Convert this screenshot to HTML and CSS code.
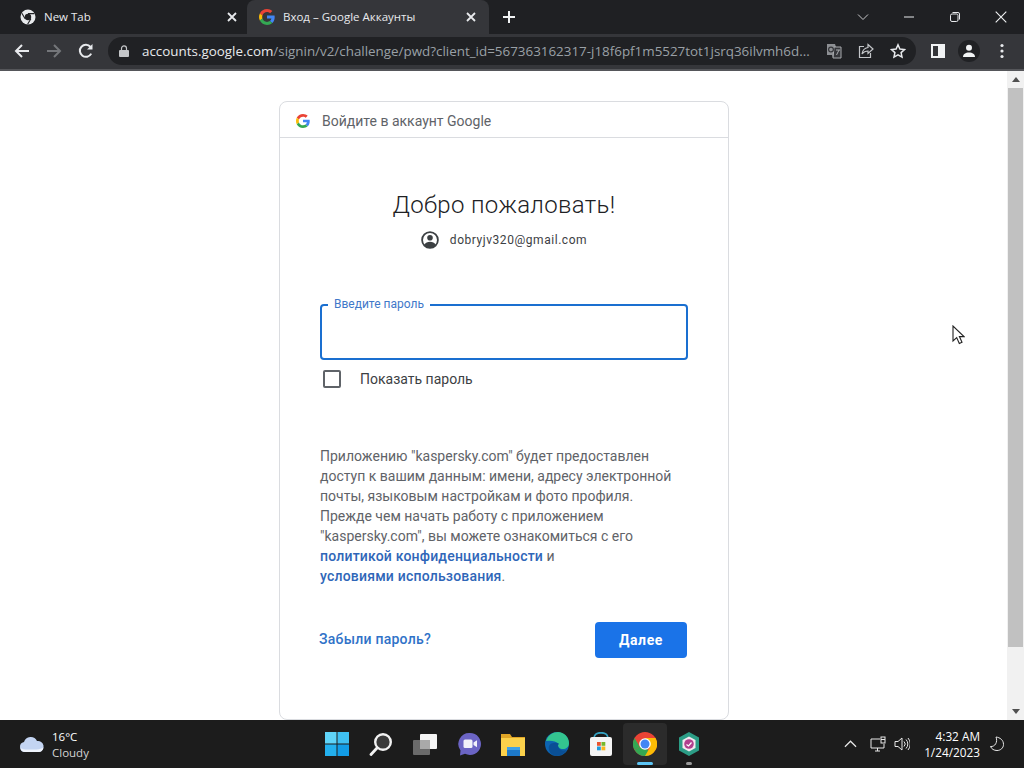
FILE: index.html
```html
<!DOCTYPE html>
<html lang="en">
<head>
    <meta charset="UTF-8">
    <meta name="viewport" content="width=device-width, initial-scale=1.0">
    <title>Вход – Google Аккаунты</title>
    <link rel="stylesheet" href="styles.css">
</head>
<body>
    <svg class="defs" width="0" height="0">
        <symbol id="google-g" viewBox="0 0 18 18">
            <path fill="#EA4335" d="M9 3.48c1.69 0 2.83.73 3.48 1.34l2.54-2.48C13.46.89 11.43 0 9 0 5.48 0 2.44 2.02.96 4.96l2.91 2.26C4.6 5.05 6.62 3.48 9 3.48z"/>
            <path fill="#4285F4" d="M17.64 9.2c0-.74-.06-1.28-.19-1.84H9v3.34h4.96c-.1.83-.64 2.08-1.84 2.92l2.84 2.2c1.7-1.57 2.68-3.88 2.68-6.62z"/>
            <path fill="#FBBC05" d="M3.88 10.78A5.54 5.54 0 0 1 3.58 9c0-.62.11-1.22.29-1.78L.96 4.96A9 9 0 0 0 0 9c0 1.45.35 2.82.96 4.04l2.92-2.26z"/>
            <path fill="#34A853" d="M9 18c2.43 0 4.47-.8 5.96-2.18l-2.84-2.2c-.76.53-1.78.9-3.12.9-2.38 0-4.4-1.57-5.12-3.74L.97 13.04C2.45 15.98 5.48 18 9 18z"/>
        </symbol>
    </svg>

    <div class="tabstrip">
        <div class="tab">
            <svg class="favicon" viewBox="0 0 16 16"><circle cx="8" cy="8" r="7.5" fill="#e8eaed"/><circle cx="8" cy="8" r="3.2" fill="#202124"/><path d="M8 4.6h6.4M5.1 9.7 1.9 4.2M10.9 9.7 7.6 15.3" stroke="#202124" stroke-width="1.1" fill="none"/></svg>
            <span class="tab-title">New Tab</span>
            <svg class="tab-close" viewBox="0 0 10 10"><path d="M1 1l8 8M9 1l-8 8" stroke="#e8eaed" stroke-width="1.8"/></svg>
        </div>
        <div class="tab tab-active">
            <svg class="favicon" viewBox="0 0 18 18"><use href="#google-g"/></svg>
            <span class="tab-title">Вход – Google Аккаунты</span>
            <svg class="tab-close" viewBox="0 0 10 10"><path d="M1 1l8 8M9 1l-8 8" stroke="#e8eaed" stroke-width="1.8"/></svg>
        </div>
        <svg class="new-tab" viewBox="0 0 12 12"><path d="M6 0v12M0 6h12" stroke="#f1f3f4" stroke-width="2"/></svg>
        <div class="window-controls">
            <svg class="win-btn" viewBox="0 0 12 12"><path d="M1 3.5l5 5 5-5" stroke="#c8c9cb" fill="none" stroke-width="1"/></svg>
            <svg class="win-btn" viewBox="0 0 12 12"><path d="M1 6h10" stroke="#e8eaed" fill="none" stroke-width="1"/></svg>
            <svg class="win-btn" viewBox="0 0 12 12"><rect x="1.5" y="3" width="7.5" height="7.5" rx="1.5" stroke="#e8eaed" fill="none"/><path d="M3.5 1.5h5.5a1.5 1.5 0 0 1 1.5 1.5v5.5" stroke="#e8eaed" fill="none"/></svg>
            <svg class="win-btn" viewBox="0 0 12 12"><path d="M.7.7l10.6 10.6M11.3.7.7 11.3" stroke="#f1f3f4" fill="none" stroke-width="1.1"/></svg>
        </div>
    </div>

    <div class="toolbar">
        <svg class="nav-icon" viewBox="0 0 16 16"><path d="M15 8H2M8 2 2 8l6 6" stroke="#e8eaed" stroke-width="2" fill="none"/></svg>
        <svg class="nav-icon" viewBox="0 0 16 16"><path d="M1 8h13M8 2l6 6-6 6" stroke="#74767a" stroke-width="2" fill="none"/></svg>
        <svg class="nav-icon" viewBox="0 0 16 16"><path d="M13.2 10.6A6 6 0 1 1 12.5 4" stroke="#e8eaed" stroke-width="2" fill="none"/><path d="M14.5 1v5.5H9z" fill="#e8eaed"/></svg>
        <div class="omnibox">
            <svg class="lock" viewBox="0 0 10 12"><path d="M2.5 5V3.4a2.5 2.5 0 0 1 5 0V5" stroke="#c4c6c9" stroke-width="1.2" fill="none"/><rect y="5" width="10" height="7" rx="1" fill="#c4c6c9"/></svg>
            <span class="url"><span class="url-host">accounts.google.com</span>/signin/v2/challenge/pwd?client_id=567363162317-j18f6pf1m5527tot1jsrq36ilvmh6d...</span>
            <svg class="omni-icon" viewBox="0 0 16 16"><path d="M1 1h8l1 3h5v11H7l-1-3H1z" fill="#8d8f93"/><path d="M8 4h7v11H7z" fill="#35363a" stroke="#a9abae"/><circle cx="5" cy="6.5" r="2.4" stroke="#35363a" fill="none" stroke-width="1.2"/><path d="M10 7h4M13 7l-2.5 5" stroke="#a9abae" fill="none"/></svg>
            <svg class="omni-icon" viewBox="0 0 16 16"><path d="M6 3.5H1.5v11h11V10" stroke="#c4c6c9" stroke-width="1.2" fill="none"/><path d="M10 1.5 15 6l-5 4.5V8C7.500 8 5.500 9 4 11c.5-3.500 2.500-6 6-6.500z" stroke="#c4c6c9" stroke-width="1.2" fill="none"/></svg>
            <svg class="omni-icon" viewBox="0 0 16 16"><path d="m8 1.800 1.900 4.200 4.600.5-3.400 3.100.9 4.500L8 11.800l-4 2.300.9-4.500L1.500 6.500 6.100 6z" stroke="#e8eaed" stroke-width="1.500" fill="none"/></svg>
        </div>
        <div class="toolbar-right">
            <svg class="side-icon" viewBox="0 0 14 14"><path fill-rule="evenodd" d="M0 0h14v14H0zM2 2v10h5V2z" fill="#f1f3f4"/></svg>
            <div class="avatar">
                <svg viewBox="0 0 14 14"><circle cx="7" cy="3.800" r="3" fill="#f1f3f4"/><path d="M1 13c0-3 2.500-4.500 6-4.500s6 1.500 6 4.500z" fill="#f1f3f4"/></svg>
            </div>
            <svg class="menu-icon" viewBox="0 0 4 16"><circle cx="2" cy="2.500" r="1.600" fill="#e8eaed"/><circle cx="2" cy="8" r="1.600" fill="#e8eaed"/><circle cx="2" cy="13.500" r="1.600" fill="#e8eaed"/></svg>
        </div>
    </div>

    <div class="viewport">
        <div class="page">
            <div class="card">
                <div class="card-header">
                    <svg class="header-g" viewBox="0 0 18 18"><use href="#google-g"/></svg>
                    <span>Войдите в аккаунт Google</span>
                </div>
                <div class="card-body">
                    <h1>Добро пожаловать!</h1>
                    <div class="account">
                        <svg class="account-icon" viewBox="0 0 18 18"><circle cx="9" cy="9" r="7.900" fill="#fff" stroke="#3c4043" stroke-width="1.800"/><circle cx="9" cy="6.800" r="2.800" fill="#3c4043"/><path d="M3 14c1.500-2.400 3.500-3.200 6-3.200s4.500.8 6 3.200c-1.500 1.800-3.500 3-6 3s-4.500-1.200-6-3z" fill="#3c4043"/></svg>
                        <span>dobryjv320@gmail.com</span>
                    </div>
                    <div class="password-field">
                        <span class="field-label">Введите пароль</span>
                    </div>
                    <label class="show-password">
                        <span class="checkbox"></span>
                        <span>Показать пароль</span>
                    </label>
                    <p class="consent">Приложению "kaspersky.com" будет предоставлен доступ к вашим данным: имени, адресу электронной почты, языковым настройкам и фото профиля. Прежде чем начать работу с приложением "kaspersky.com", вы можете ознакомиться с его<br><a href="#">политикой конфиденциальности</a> и<br><a href="#">условиями использования</a>.</p>
                    <div class="actions">
                        <a class="forgot" href="#">Забыли пароль?</a>
                        <button class="next">Далее</button>
                    </div>
                </div>
            </div>
            <svg class="cursor" viewBox="0 0 13 20"><path d="M1 1v15l3.700-3.400 2.600 5.900 2.700-1.200-2.600-5.700H12z" fill="#fff" stroke="#222" stroke-width="1.100"/></svg>
        </div>
        <div class="scrollbar">
            <div class="scroll-arrow"><svg viewBox="0 0 8 5"><path d="M4 0l4 5H0z" fill="#505050"/></svg></div>
            <div class="scroll-track"><div class="scroll-thumb"></div></div>
            <div class="scroll-arrow"><svg viewBox="0 0 8 5"><path d="M0 0h8L4 5z" fill="#505050"/></svg></div>
        </div>
    </div>

    <div class="taskbar">
        <div class="weather">
            <svg class="weather-icon" viewBox="0 0 26 18"><path d="M6 17a5 5 0 0 1-1-9.900A7 7 0 0 1 18 6a5.500 5.500 0 0 1 2 11z" fill="#c3d4f2"/><path d="M1.500 13c3 2 7 1.500 10 1.500s9 .5 13-2c-.5 3-2.500 4.500-4.500 4.500H6c-2.500 0-4-1.500-4.500-4z" fill="#eef3fc"/></svg>
            <div class="weather-text">
                <div class="temp">16°C</div>
                <div class="cond">Cloudy</div>
            </div>
        </div>
        <div class="task-icons">
            <div class="task-icon">
                <svg viewBox="0 0 24 24"><rect x="0" y="0" width="11.500" height="11.500" fill="#5fd4f8"/><rect x="12.500" y="0" width="11.500" height="11.500" fill="#3fc0f2"/><rect x="0" y="12.500" width="11.500" height="11.500" fill="#23b0ee"/><rect x="12.500" y="12.500" width="11.500" height="11.500" fill="#129ce6"/></svg>
            </div>
            <div class="task-icon">
                <svg viewBox="0 0 24 24"><circle cx="14" cy="10" r="7.800" fill="#3a3a3a" stroke="#f2f2f2" stroke-width="2.400"/><path d="M8 16l-6 6.500" stroke="#f2f2f2" stroke-width="2.800" stroke-linecap="round"/></svg>
            </div>
            <div class="task-icon">
                <svg viewBox="0 0 24 24"><rect x="7" y="2" width="17" height="15" rx="1" fill="#f4f4f4"/><rect x="0" y="8" width="17" height="15" rx="1" fill="#6a6a6a"/><rect x="7" y="8" width="10" height="9" fill="#a9a9a9"/></svg>
            </div>
            <div class="task-icon">
                <svg viewBox="0 0 24 24"><path d="M13 1a11 11 0 1 1-5 20.800L3 23.500l.5-5A11 11 0 0 1 13 1z" fill="#6b64c4"/><rect x="6.500" y="7.500" width="9" height="8.500" rx="1.500" fill="#f2f2fa"/><path d="M16.500 10.500l3.500-2.300v7l-3.500-2.300z" fill="#f2f2fa"/></svg>
            </div>
            <div class="task-icon">
                <svg viewBox="0 0 24 24"><path d="M0 2h9l2 3h13v19H0z" fill="#e0a526"/><rect x="0" y="6" width="24" height="18" fill="#fbd14b"/><rect x="6" y="15" width="13" height="9" fill="#1d79c9"/><rect x="6" y="15" width="13" height="3" fill="#3fa2e6"/></svg>
            </div>
            <div class="task-icon">
                <svg viewBox="0 0 24 24"><circle cx="12" cy="12" r="12" fill="#0c63b0"/><path d="M1 9C3 3 8 0 13 0c6 0 11 5 11 11 0 4-3 6-6 6-3.500 0-5-2-5-3.500 0-1 .8-1.500.8-1.500C11 9 6.500 8.500 1 9z" fill="#33c48f"/><path d="M13 13.500c0 3 3 5 6 5 1 0 2-.2 3-.8A12 12 0 0 1 9 23.600C5 22 3 18 4 14c1.500-3 6-4 9.800-2.500-.5.500-.8 1.200-.8 2z" fill="#0a4f95"/></svg>
            </div>
            <div class="task-icon">
                <svg viewBox="0 0 24 24"><path d="M5 6c0-7 14-7 14 0" stroke="#35a3c4" stroke-width="1.800" fill="none"/><rect x="1" y="5" width="22" height="19" rx="2" fill="#f5f5f5"/><rect x="8" y="10" width="3.800" height="3.800" fill="#e9552f"/><rect x="12.500" y="10" width="3.800" height="3.800" fill="#75b82b"/><rect x="8" y="14.500" width="3.800" height="3.800" fill="#1f9bdc"/><rect x="12.500" y="14.500" width="3.800" height="3.800" fill="#f7b71d"/></svg>
            </div>
            <div class="task-icon task-active">
                <svg viewBox="0 0 24 24"><circle cx="12" cy="12" r="12" fill="#ea4335"/><path d="M12 12 1.600 18A12 12 0 0 0 12 24c2 0 3 0 5-1z" fill="#34a853"/><path d="M12 6h10.500A12 12 0 0 1 12 24l5.200-9z" fill="#fbbc05"/><path d="M1.600 6 6.800 15 1.600 18A12 12 0 0 1 1.600 6z" fill="#34a853"/><circle cx="12" cy="12" r="5.800" fill="#fff"/><circle cx="12" cy="12" r="4.500" fill="#4285f4"/></svg>
                <span class="task-indicator"></span>
            </div>
            <div class="task-icon task-open">
                <svg viewBox="0 0 24 24"><path d="M12 0l10 5.500v13L12 24 2 18.500v-13z" fill="#2c9d86"/><path d="M12 4.500l6.500 3.500v8L12 19.500 5.500 16V8z" fill="#f4e9ef"/><circle cx="12" cy="12" r="4.800" fill="#b13f8e"/><path d="M9.500 12.500l2 1.500 3-3.500" stroke="#fff" fill="none" stroke-width="1.200"/></svg>
                <span class="task-dot"></span>
            </div>
        </div>
        <div class="tray">
            <svg class="tray-chevron" viewBox="0 0 14 8"><path d="M1 7l6-6 6 6" stroke="#e8e8e8" fill="none" stroke-width="1.300"/></svg>
            <svg class="tray-icon" viewBox="0 0 16 16"><path d="M10 3H1v9h13V8" stroke="#e8e8e8" fill="none"/><path d="M5 15h5M7.500 12v3" stroke="#e8e8e8"/><rect x="11" y="1" width="4" height="6" stroke="#e8e8e8" fill="none"/><path d="M11 3.500h4" stroke="#e8e8e8"/></svg>
            <svg class="tray-icon" viewBox="0 0 16 16"><path d="M1 5.500h3L8 2v12l-4-3.500H1z" stroke="#e8e8e8" fill="none"/><path d="M10 5.500a3.500 3.500 0 0 1 0 5M12 3.500a6.500 6.500 0 0 1 0 9M14 2a9 9 0 0 1 0 12" stroke="#e8e8e8" fill="none"/></svg>
            <div class="clock">
                <div>4:32 AM</div>
                <div>1/24/2023</div>
            </div>
            <svg class="moon" viewBox="0 0 16 16"><path d="M7 1c4 .5 7.500 3 7.500 7.500 0 3.500-3 6-6.500 6-3 0-5.500-1.500-6.500-4C6 11 9 6 7 1z" stroke="#e8e8e8" fill="none"/></svg>
        </div>
    </div>
</body>
</html>
```

FILE: styles.css
```css
* {
    box-sizing: border-box;
}
html, body {
    height: 100%;
}
body {
    margin: 0;
    display: flex;
    flex-direction: column;
    overflow: hidden;
    background: #fff;
    font-family: "Roboto", "Liberation Sans", sans-serif;
}
.defs {
    display: none;
}
a {
    text-decoration: none;
}

/* browser chrome */
.tabstrip {
    height: 34px;
    flex: none;
    display: flex;
    align-items: center;
    padding-left: 8px;
    background: #1f2023;
    color: #e8eaed;
    font-family: "Open Sans", "Liberation Sans", sans-serif;
    font-size: 11.5px;
}
.tab {
    width: 239px;
    height: 34px;
    display: flex;
    align-items: center;
    padding: 0 10px 0 12px;
}
.tab-active {
    width: 242px;
    padding-right: 13px;
    background: #35363a;
    border-radius: 8px 8px 0 0;
}
.favicon {
    width: 16px;
    height: 16px;
    flex: none;
}
.tab-title {
    flex: 1;
    margin: 0 0 2px 8px;
    white-space: nowrap;
}
.tab-close {
    width: 10px;
    height: 10px;
    flex: none;
}
.new-tab {
    width: 12px;
    height: 12px;
    margin-left: 14px;
}
.window-controls {
    margin-left: auto;
    display: flex;
    align-items: center;
    gap: 34px;
    padding-right: 17px;
}
.win-btn {
    width: 12px;
    height: 12px;
}
.toolbar {
    height: 37px;
    flex: none;
    display: flex;
    align-items: center;
    padding: 0 0 2px 14px;
    background: #35363a;
    border-bottom: 2px solid #55565a;
}
.nav-icon {
    width: 16px;
    height: 16px;
    margin-right: 16px;
}
.omnibox {
    width: 808px;
    height: 28px;
    margin-left: -2px;
    display: flex;
    align-items: center;
    padding: 0 10px 0 11px;
    border-radius: 14px;
    background: #202124;
}
.lock {
    width: 10px;
    height: 12px;
    flex: none;
}
.url {
    flex: 1;
    margin: 0 -4px 0 13px;
    white-space: nowrap;
    overflow: hidden;
    font-family: "Open Sans", "Liberation Sans", sans-serif;
    font-size: 13.4px;
    color: #9aa0a6;
}
.url-host {
    color: #e8eaed;
}
.omni-icon {
    width: 16px;
    height: 16px;
    flex: none;
    margin-left: 16px;
}
.toolbar-right {
    flex: 1;
    display: flex;
    align-items: center;
    padding-left: 15px;
}
.side-icon {
    width: 14px;
    height: 14px;
}
.avatar {
    width: 22px;
    height: 22px;
    margin-left: 13px;
    padding: 4px;
    display: flex;
    border-radius: 50%;
    background: #202124;
}
.menu-icon {
    width: 4px;
    height: 16px;
    margin-left: 20px;
}

/* page */
.viewport {
    flex: 1;
    min-height: 0;
    display: flex;
}
.page {
    flex: 1;
    position: relative;
    padding: 30px 0 0 279px;
    overflow: hidden;
}
.card {
    width: 450px;
    height: 619px;
    border: 1px solid #dadce0;
    border-radius: 8px;
}
.card-header {
    height: 36px;
    display: flex;
    align-items: center;
    padding: 2px 0 0 16px;
    border-bottom: 1px solid #dadce0;
    font-size: 14px;
    color: #5f6368;
}
.header-g {
    width: 14px;
    height: 14px;
    margin-right: 12px;
}
.card-body {
    padding: 51px 40px 0;
}
h1 {
    margin: 0;
    font-size: 24px;
    font-weight: 300;
    letter-spacing: 0.35px;
    line-height: 32px;
    text-align: center;
    color: #202124;
}
.account {
    height: 20px;
    margin-top: 9px;
    display: flex;
    justify-content: center;
    align-items: center;
    gap: 11px;
    font-size: 12px;
    letter-spacing: 0.55px;
    color: #3c4043;
}
.account-icon {
    width: 18px;
    height: 18px;
}
.password-field {
    position: relative;
    width: 368px;
    height: 56px;
    margin-top: 54px;
    border: 2px solid #1a6fd0;
    border-radius: 4px;
}
.field-label {
    position: absolute;
    left: 6px;
    top: -9px;
    padding: 0 6px;
    background: #fff;
    font-size: 12px;
    line-height: 14px;
    color: #3f78c9;
}
.show-password {
    height: 20px;
    margin-top: 9px;
    display: flex;
    align-items: center;
    padding-left: 3px;
    font-size: 14px;
    color: #3c4043;
}
.checkbox {
    width: 18px;
    height: 18px;
    margin-right: 19px;
    border: 2px solid #5f6368;
    border-radius: 2px;
}
.consent {
    width: 368px;
    margin: 57px 0 0;
    font-size: 14px;
    line-height: 20px;
    color: #5f6368;
}
.consent a {
    font-weight: 500;
    letter-spacing: 0.2px;
    color: #2f66b8;
}
.actions {
    width: 368px;
    margin-top: 36px;
    display: flex;
    justify-content: space-between;
    align-items: center;
}
.forgot {
    margin: 0 0 2px -1px;
    font-size: 14px;
    font-weight: 500;
    letter-spacing: 0.25px;
    color: #2f72c8;
}
.next {
    width: 92px;
    height: 36px;
    margin-right: 1px;
    border: none;
    border-radius: 4px;
    background: #1a73e8;
    color: #fff;
    font-family: inherit;
    font-size: 14px;
    font-weight: 700;
    letter-spacing: 0.6px;
}
.cursor {
    position: absolute;
    left: 952px;
    top: 254px;
    width: 13px;
    height: 20px;
}
.scrollbar {
    width: 17px;
    flex: none;
    display: flex;
    flex-direction: column;
    background: #f1f1f1;
}
.scroll-arrow {
    height: 17px;
    display: flex;
    align-items: center;
    justify-content: center;
}
.scroll-arrow svg {
    width: 8px;
    height: 5px;
}
.scroll-track {
    flex: 1;
}
.scroll-thumb {
    height: 559px;
    margin-left: 1px;
    width: 15px;
    background: #c1c1c1;
}

/* windows taskbar */
.taskbar {
    height: 48px;
    flex: none;
    display: grid;
    grid-template-columns: 1fr auto 1fr;
    align-items: center;
    background: #1c1c1c;
    color: #fff;
    font-family: "Open Sans", "Liberation Sans", sans-serif;
    font-size: 12px;
}
.weather {
    display: flex;
    align-items: center;
    padding-left: 19px;
}
.weather-icon {
    width: 26px;
    height: 18px;
    margin-right: 7px;
}
.weather-text {
    margin-top: 2px;
    font-size: 11.5px;
    line-height: 16px;
}
.cond {
    color: #d4d4d4;
}
.task-icons {
    display: flex;
    padding-left: 2px;
}
.task-icon {
    width: 44px;
    height: 42px;
    position: relative;
    display: flex;
    align-items: center;
    justify-content: center;
    border-radius: 4px;
}
.task-icon svg {
    width: 24px;
    height: 24px;
}
.task-active {
    background: #2b2b2b;
}
.task-indicator {
    position: absolute;
    left: 14px;
    bottom: 0;
    width: 16px;
    height: 3px;
    border-radius: 2px;
    background: #5cc5f5;
}
.task-dot {
    position: absolute;
    left: 19px;
    bottom: 0;
    width: 6px;
    height: 3px;
    border-radius: 2px;
    background: #9a9a9a;
}
.tray {
    display: flex;
    align-items: center;
    justify-content: flex-end;
    padding-right: 19px;
}
.tray-chevron {
    width: 13px;
    height: 8px;
    margin-right: 13px;
}
.tray-icon {
    width: 16px;
    height: 16px;
    margin-right: 8px;
}
.clock {
    margin-left: 6px;
    font-size: 11.8px;
    line-height: 16px;
    text-align: right;
}
.moon {
    width: 16px;
    height: 16px;
    margin-left: 9px;
}
```
